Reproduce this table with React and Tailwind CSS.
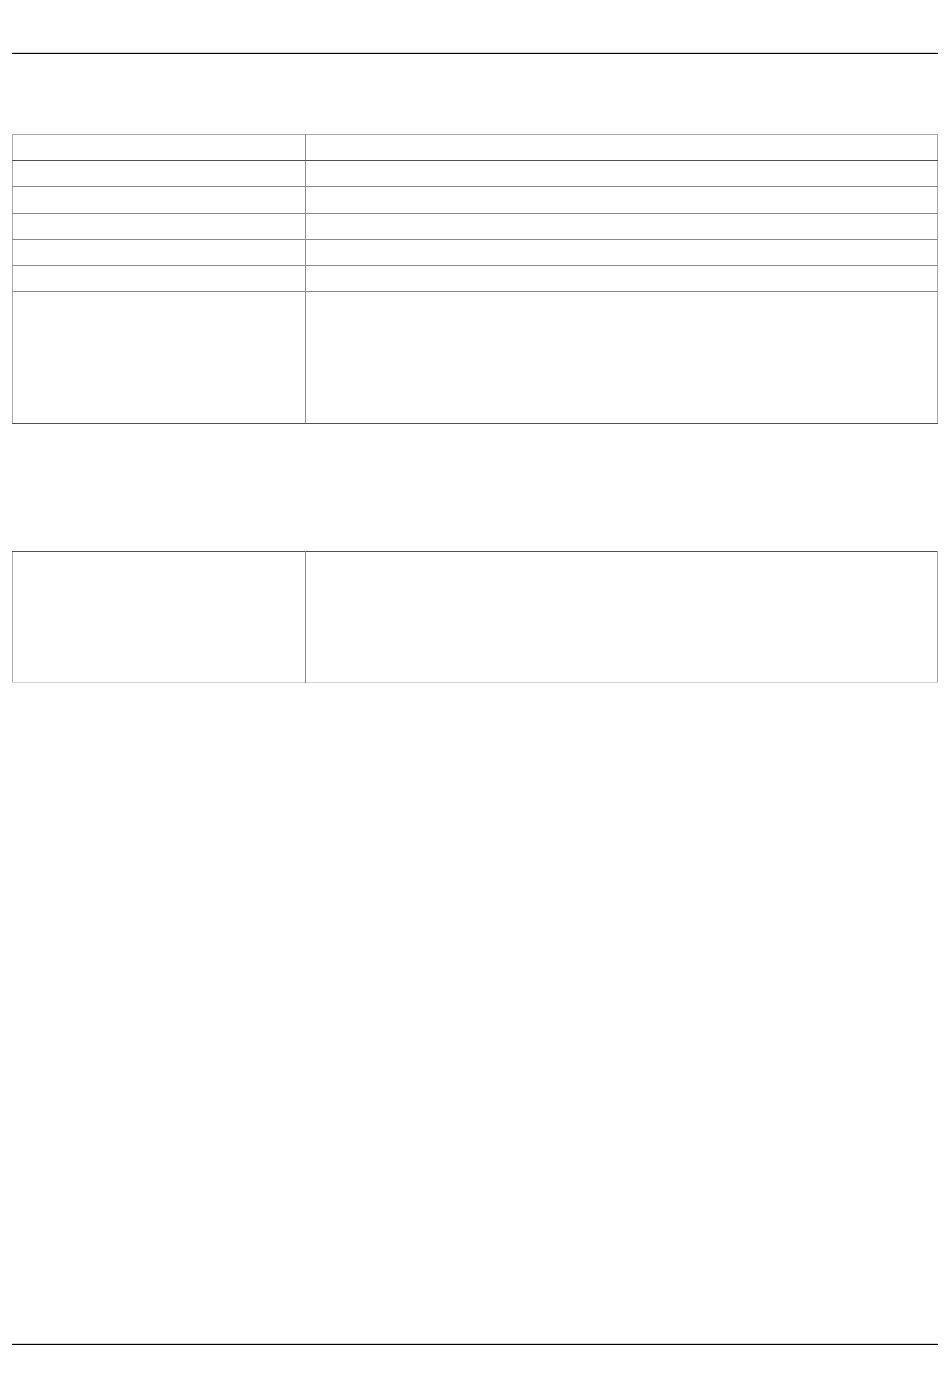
import React from "react";

const Rule = () => (
  <div className="w-full">
    <div className="h-px bg-[#d0d0d0]" />
    <div className="h-px bg-black" />
  </div>
);

const Row = ({ h, last }) => (
  <tr className={h}>
    <td className={`w-[293px] border-r border-[#8a8a8a] ${last ? "" : "border-b border-[#8a8a8a]"}`}></td>
    <td className={last ? "" : "border-b border-[#8a8a8a]"}></td>
  </tr>
);

export default function App() {
  return (
    <div className="min-h-[1398px] bg-white px-3 pt-[52px] font-['Liberation_Sans',sans-serif]">
      <Rule />

      {/* details table */}
      <table className="mt-[80px] w-full border-collapse border-t border-l border-r border-[#a8a8a8] border-b-[#5a5a5a]">
        <tbody>
          <tr className="h-[26px]">
            <td className="w-[293px] border-r border-b border-r-[#8a8a8a] border-b-[#505050]"></td>
            <td className="border-b border-[#505050]"></td>
          </tr>
          <Row h="h-[26px]" />
          <Row h="h-[27px]" />
          <Row h="h-[26px]" />
          <Row h="h-[26px]" />
          <Row h="h-[26px]" />
          <tr className="h-[132px]">
            <td className="w-[293px] border-r border-b border-r-[#8a8a8a] border-b-[#505050]"></td>
            <td className="border-b border-[#505050]"></td>
          </tr>
        </tbody>
      </table>

      {/* notes table */}
      <table className="mt-[127px] w-full border-collapse border-t border-l border-r border-b border-t-[#505050] border-l-[#a8a8a8] border-r-[#a8a8a8] border-b-[#d8d8d8]">
        <tbody>
          <tr className="h-[131px]">
            <td className="w-[293px] border-r border-[#8a8a8a]"></td>
            <td></td>
          </tr>
        </tbody>
      </table>

      <div className="mt-[660px]">
        <Rule />
      </div>
    </div>
  );
}
